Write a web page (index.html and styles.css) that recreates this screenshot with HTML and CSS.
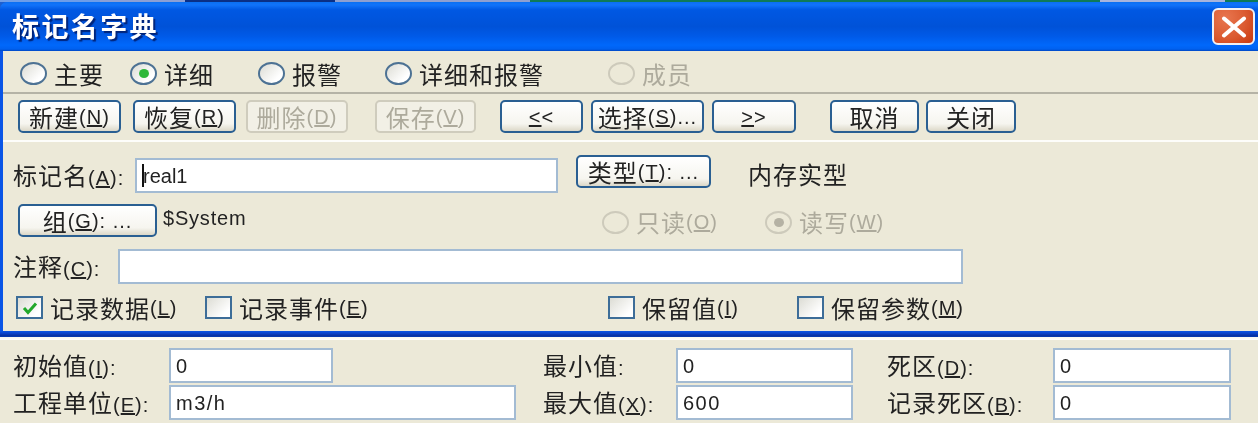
FILE: index.html
```html
<!DOCTYPE html>
<html lang="zh-CN">
<head>
<meta charset="utf-8">
<title>标记名字典</title>
<link rel="stylesheet" href="styles.css">
</head>
<body>
<div class="page">
  <div class="strip">
    <i class="s1"></i><i class="s2"></i><i class="s3"></i><i class="s4"></i><i class="s5"></i><i class="s6"></i><i class="s7"></i>
  </div>
  <header class="titlebar">
    <h1 class="title">标记名字典</h1>
    <div class="close"><svg viewBox="0 0 26 22" width="26" height="22"><path d="M3 2.5 23 19.5M23 2.5 3 19.5" stroke="#fff" stroke-width="4" stroke-linecap="round" fill="none"/></svg></div>
  </header>
  <main class="window">
    <div class="tabs">
      <label class="opt w-main"><span class="radio"></span>主要</label>
      <label class="opt w-detail"><span class="radio on"></span>详细</label>
      <label class="opt w-alarm"><span class="radio"></span>报警</label>
      <label class="opt w-both"><span class="radio"></span>详细和报警</label>
      <label class="opt off"><span class="radio"></span>成员</label>
    </div>
    <div class="toolbar">
      <button class="btn b-new">新建<span class="lat">(<u>N</u>)</span></button>
      <button class="btn b-rest">恢复<span class="lat">(<u>R</u>)</span></button>
      <button class="btn b-del" disabled>删除<span class="lat">(<u>D</u>)</span></button>
      <button class="btn b-save" disabled>保存<span class="lat">(<u>V</u>)</span></button>
      <button class="btn b-prev"><span class="lat"><u>&lt;</u>&lt;</span></button>
      <button class="btn b-sel">选择<span class="lat">(<u>S</u>)...</span></button>
      <button class="btn b-next"><span class="lat"><u>&gt;</u>&gt;</span></button>
      <button class="btn b-cancel">取消</button>
      <button class="btn b-close">关闭</button>
    </div>
    <section class="form">
      <div class="row r-name">
        <span class="lbl l-name">标记名<span class="lat">(<u>A</u>):</span></span>
        <div class="field f-name"><span class="caret"></span><span class="ftext">real1</span></div>
        <button class="btn b-type">类型<span class="lat">(<u>T</u>): ...</span></button>
        <span class="lbl l-type">内存实型</span>
      </div>
      <div class="row r-group">
        <button class="btn b-group">组<span class="lat">(<u>G</u>): ...</span></button>
        <span class="sys">$System</span>
        <label class="opt off o-ro"><span class="radio"></span>只读<span class="lat">(<u>O</u>)</span></label>
        <label class="opt off"><span class="radio on"></span>读写<span class="lat">(<u>W</u>)</span></label>
      </div>
      <div class="row r-note">
        <span class="lbl l-note">注释<span class="lat">(<u>C</u>):</span></span>
        <div class="field f-note"></div>
      </div>
      <div class="row r-checks">
        <label class="opt c-log"><span class="check on"><svg viewBox="0 0 16 14" width="16" height="14"><path d="M2 7 6 11.5 14 2.5" stroke="#22a82c" stroke-width="3" fill="none"/></svg></span>记录数据<span class="lat">(<u>L</u>)</span></label>
        <label class="opt c-evt"><span class="check"></span>记录事件<span class="lat">(<u>E</u>)</span></label>
        <label class="opt c-ret"><span class="check"></span>保留值<span class="lat">(<u>I</u>)</span></label>
        <label class="opt"><span class="check"></span>保留参数<span class="lat">(<u>M</u>)</span></label>
      </div>
    </section>
  </main>
  <div class="band"></div>
  <section class="limits">
    <span class="lbl">初始值<span class="lat">(<u>I</u>):</span></span>
    <div class="field f-short"><span class="ftext">0</span></div>
    <span class="lbl p-mid">最小值<span class="lat">:</span></span>
    <div class="field"><span class="ftext">0</span></div>
    <span class="lbl p-right">死区<span class="lat">(<u>D</u>):</span></span>
    <div class="field"><span class="ftext">0</span></div>
    <span class="lbl">工程单位<span class="lat">(<u>E</u>):</span></span>
    <div class="field"><span class="ftext">m3/h</span></div>
    <span class="lbl p-mid">最大值<span class="lat">(<u>X</u>):</span></span>
    <div class="field"><span class="ftext">600</span></div>
    <span class="lbl p-right">记录死区<span class="lat">(<u>B</u>):</span></span>
    <div class="field"><span class="ftext">0</span></div>
  </section>
</div>
</body>
</html>
```
FILE: styles.css
```css
* { box-sizing: border-box; }
html, body { margin: 0; padding: 0; }
body {
  width: 1258px;
  height: 423px;
  overflow: hidden;
  background: #ece9d8;
  color: #222;
  font-family: "Noto Sans CJK SC", "Liberation Sans", sans-serif;
  font-size: 24px;
  letter-spacing: 1px;
  line-height: 1;
}
.page {
  display: flex;
  flex-direction: column;
  width: 1258px;
  height: 423px;
  background: linear-gradient(#1b5fd0 0 30px, #ece9d8 30px);
  filter: blur(0.45px);
}

.strip { display: flex; height: 2px; flex: none; }
.strip i { display: block; height: 100%; }
.s1 { width: 100px; background: #6d9de8; }
.s2 { width: 85px; background: #8c9fd4; }
.s3 { width: 150px; background: #0a2f86; }
.s4 { width: 195px; background: #8e9fd0; }
.s5 { width: 570px; background: #0f7a58; }
.s6 { width: 125px; background: #a7b4dc; }
.s7 { flex: 1; background: #0f7a58; }

.titlebar {
  flex: none;
  height: 49px;
  display: flex;
  align-items: center;
  justify-content: space-between;
  padding: 0 3px 0 12px;
  border-radius: 7px 0 0 0;
  background: linear-gradient(#0a6ff2 0, #1173fa 6%, #0058e3 16%, #0052d8 50%, #005ae8 70%, #0068fb 88%, #0061f0 96%, #0048c4 100%);
}
.title {
  margin: 0 0 3px;
  color: #fff;
  font-size: 27px;
  font-weight: 700;
  letter-spacing: 2.4px;
  text-shadow: 2px 2px 1px #00247a;
}
.close {
  width: 43px;
  height: 37px;
  display: flex;
  align-items: center;
  justify-content: center;
  border: 2px solid #f0f0f4;
  border-radius: 6px;
  background: radial-gradient(circle at 30% 25%, #e8764f, #db5a30 55%, #c9380f);
}

.window {
  flex: none;
  height: 280px;
  border-left: 3px solid #0a55e6;
  display: flex;
  flex-direction: column;
}
.tabs {
  height: 43px;
  flex: none;
  display: flex;
  align-items: center;
  padding: 4px 0 0 17px;
  border-bottom: 2px solid #b5b3a6;
}
.opt { display: flex; align-items: center; white-space: nowrap; }
.opt.off { color: #adaa9c; }
.radio {
  flex: none;
  width: 27px;
  height: 23px;
  margin-right: 7px;
  border: 2px solid #4d7294;
  border-radius: 50%;
  background: linear-gradient(135deg, #dcdcd4, #ffffff 75%);
  display: flex;
  align-items: center;
  justify-content: center;
}
.radio.on::after {
  content: "";
  width: 10px;
  height: 9px;
  border-radius: 50%;
  background: #2fb83a;
}
.off .radio { border-color: #cdcabb; background: #ece9d8; }
.off .radio.on::after { background: #b5b2a4; }
.w-main { width: 110px; }
.w-detail { width: 128px; }
.w-alarm { width: 127px; }
.w-both { width: 223px; }

.toolbar {
  height: 48px;
  flex: none;
  display: flex;
  align-items: center;
  padding: 0 0 1px 15px;
  border-bottom: 2px solid #fdfdfa;
}
.btn {
  height: 33px;
  padding: 0;
  border: 2px solid #2a5f92;
  border-radius: 5px;
  background: linear-gradient(#ffffff, #f6f5ef 75%, #dcd8c8);
  color: #222;
  font: inherit;
  letter-spacing: inherit;
  display: inline-flex;
  align-items: center;
  justify-content: center;
  white-space: pre;
}
.btn:disabled { border-color: #cfccbd; background: #f2f0e6; color: #adaa9c; }
.lat { font-family: "Liberation Sans", sans-serif; font-size: 20px; }
.b-new { width: 103px; }
.b-rest { width: 103px; margin-left: 12px; }
.b-del { width: 102px; margin-left: 10px; }
.b-save { width: 101px; margin-left: 27px; }
.b-prev { width: 83px; margin-left: 24px; }
.b-sel { width: 113px; margin-left: 8px; }
.b-next { width: 84px; margin-left: 8px; }
.b-cancel { width: 89px; margin-left: 34px; }
.b-close { width: 90px; margin-left: 7px; }

.form { flex: 1; display: flex; flex-direction: column; padding-left: 10px; }
.row { display: flex; align-items: center; }
.r-name { height: 54px; padding: 16px 0 3px; }
.r-group { height: 46px; padding: 8px 0 5px 5px; }
.r-note { height: 42px; padding-top: 7px; }
.r-checks { height: 47px; padding: 12px 0 12px 3px; }

.lbl { white-space: pre; }
.field {
  height: 35px;
  display: flex;
  align-items: center;
  padding-left: 5px;
  border: 2px solid #a3bbd3;
  background: #fff;
  overflow: hidden;
}
.ftext { font-family: "Liberation Sans", sans-serif; font-size: 20px; letter-spacing: 1.5px; }
.l-name { width: 122px; }
.f-name { width: 423px; }
.f-name .ftext { letter-spacing: 0; }
.caret { width: 2px; height: 23px; background: #111; margin-right: -1px; }
.b-type { width: 135px; margin: 0 0 8px 18px; }
.l-type { margin: 0 0 3px 37px; }
.b-group { width: 139px; }
.sys {
  width: 445px;
  padding: 4px 0 0 6px;
  font-family: "Liberation Sans", sans-serif;
  font-size: 20px;
  letter-spacing: .8px;
  align-self: flex-start;
}
.o-ro { width: 163px; }
.r-group .opt { padding-top: 3px; }
.l-note { width: 105px; }
.f-note { width: 845px; }

.check {
  flex: none;
  width: 27px;
  height: 23px;
  margin-right: 7px;
  border: 2px solid #3d6d98;
  background: linear-gradient(135deg, #dcdcd4, #ffffff 80%);
  display: flex;
  align-items: center;
  justify-content: center;
}
.c-log { width: 189px; }
.c-evt { width: 403px; }
.c-ret { width: 189px; }

.band {
  flex: none;
  height: 9px;
  background: linear-gradient(#0a55e6 0, #0a3fc4 30%, #062f9c 55%, #0a48d0 72%, #f8f7f0 72%, #ffffff 100%);
}

.limits {
  flex: 1;
  display: grid;
  grid-template-columns: 156px 347px 160px 177px 200px 178px;
  grid-auto-rows: 35px;
  row-gap: 2px;
  align-items: center;
  padding: 8px 0 0 13px;
}
.limits .field { height: 100%; }
.f-short { width: 164px; }
.p-mid { padding-left: 27px; }
.p-right { padding-left: 34px; }
```
